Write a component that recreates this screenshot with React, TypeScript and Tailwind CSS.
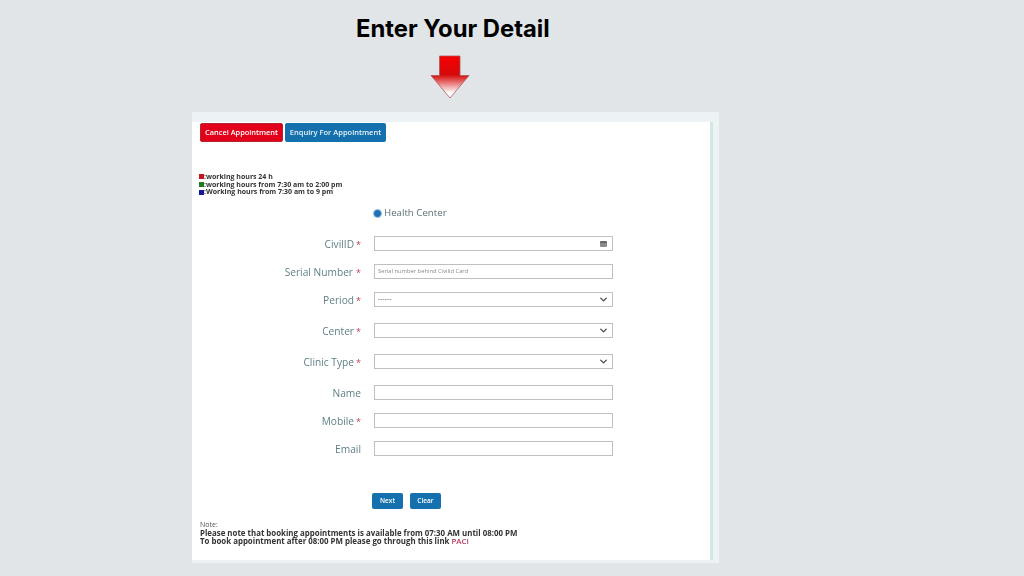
import { ChevronDown } from 'lucide-react';

const labelFont = { fontFamily: '"Open Sans", "Noto Sans", sans-serif' };

function FormRow({ label, star = true, gap = '', top, children }: { label: string; star?: boolean; gap?: string; top: string; children?: React.ReactNode }) {
  return (
    <div className={`flex items-center h-[15px] ${top}`}>
      <div className="w-[169px] flex justify-end pt-[1px] text-[10.2px] leading-[15px] text-[#5f8087] whitespace-nowrap">
        <span>{label}</span>
        {star && <span className={`text-[#b5414f] text-[9px] ml-[2px] ${gap}`}>*</span>}
      </div>
      <div className="ml-[13px] w-[239px] h-[15px] border border-[#bcc0c2] bg-white flex items-center justify-between pl-[3px] pr-[3px] shrink-0">
        {children}
      </div>
    </div>
  );
}

function Select({ value }: { value?: string }) {
  return (
    <>
      <span className="text-[7px] text-[#555]">{value}</span>
      <ChevronDown size={11} strokeWidth={3} className="text-[#4a4a4a]" />
    </>
  );
}

export default function App() {
  return (
    <div className="w-[1024px] h-[576px] overflow-hidden bg-[#e1e5e8] flex flex-col items-center" style={labelFont}>
      <div className="w-full pl-[356px] pt-[14px]">
        <h1 className="text-[23.8px] leading-[30px] font-bold text-black" style={{ fontFamily: 'Inter, sans-serif' }}>Enter Your Detail</h1>
      </div>
      <div className="w-full pl-[430px] mt-[11px]">
        <svg width="40" height="44" viewBox="0 0 40 44" className="block">
          <defs>
            <linearGradient id="arrow" x1="0" y1="0" x2="0" y2="1">
              <stop offset="0" stopColor="#f60000" />
              <stop offset="0.45" stopColor="#d60a0a" />
              <stop offset="0.88" stopColor="#ffffff" />
            </linearGradient>
          </defs>
          <path d="M9.5 1H30V20.5H39L20 43L1 20.5H9.5Z" fill="url(#arrow)" stroke="#a85a5a" strokeWidth="0.8" />
        </svg>
      </div>
      <div className="w-full pl-[192px] mt-[13px]">
        <div className="w-[527px] h-[451px] bg-[#edf2f4] pt-[10px] pr-[6px] pb-[3px] flex blur-[0.35px]">
          <div className="w-[518px] h-[438px] bg-white border-r-[3px] border-r-[#d3e6e6] box-content">
            <div className="flex gap-[2px] pl-[8px] pt-[1px]">
              <button className="w-[83px] h-[19px] rounded-[2px] bg-[#e3001b] border border-[#b3252c] text-white text-[7.4px] font-semibold">Cancel Appointment</button>
              <button className="w-[101px] h-[19px] rounded-[2px] bg-[#1471ae] text-[#e8f2f8] text-[7.5px] font-semibold">Enquiry For Appointment</button>
            </div>
            <ul className="pl-[7px] mt-[31px] text-[7px] leading-[7.7px] font-bold text-[#333]">
              <li className="flex items-center"><span className="w-[5px] h-[5px] bg-[#c8141c]" />:working hours 24 h</li>
              <li className="flex items-center"><span className="w-[5px] h-[5px] bg-[#1f7a22]" />:working hours from 7:30 am to 2:00 pm</li>
              <li className="flex items-center"><span className="w-[5px] h-[5px] bg-[#17179a]" />:Working hours from 7:30 am to 9 pm</li>
            </ul>
            <div className="flex items-center pl-[181px] mt-[10px] h-[15px] text-[9.7px] text-[#5f7078]">
              <span className="w-[9px] h-[9px] rounded-full bg-[#1f6fb2] border-[1.5px] border-[#9cc4e4] mr-[2px]" />
              Health Center
            </div>
            <FormRow label="CivilID" top="mt-[15px]">
              <span />
              <span className="w-[7px] h-[6px] bg-[#8a8a8a] rounded-[1px] border-t-2 border-[#666] mr-[2px]" />
            </FormRow>
            <FormRow label="Serial Number" gap="ml-[3px]" top="mt-[13px]">
              <span className="text-[5.8px] text-[#8a8a8a]">Serial number behind Civilid Card</span>
            </FormRow>
            <FormRow label="Period" top="mt-[13px]"><Select value="------" /></FormRow>
            <FormRow label="Center" top="mt-[16px]"><Select /></FormRow>
            <FormRow label="Clinic Type" top="mt-[16px]"><Select /></FormRow>
            <FormRow label="Name" star={false} top="mt-[16px]" />
            <FormRow label="Mobile" top="mt-[13px]" />
            <FormRow label="Email" star={false} top="mt-[13px]" />
            <div className="flex gap-[7px] pl-[180px] mt-[37px]">
              <button className="w-[31px] h-[16px] rounded-[2px] bg-[#1471ae] text-white text-[6.5px] font-semibold">Next</button>
              <button className="w-[31px] h-[16px] rounded-[2px] bg-[#1471ae] text-white text-[6.5px] font-semibold">Clear</button>
            </div>
            <div className="pl-[8px] mt-[12px] text-[7.88px] leading-[8px] text-[#333]">
              <div className="text-[7px] text-[#555]">Note:</div>
              <div className="font-bold">Please note that booking appointments is available from 07:30 AM until 08:00 PM</div>
              <div className="font-bold">To book appointment after 08:00 PM please go through this link <span className="font-semibold text-[#b03a5a]">PACI</span></div>
            </div>
          </div>
        </div>
      </div>
    </div>
  );
}
